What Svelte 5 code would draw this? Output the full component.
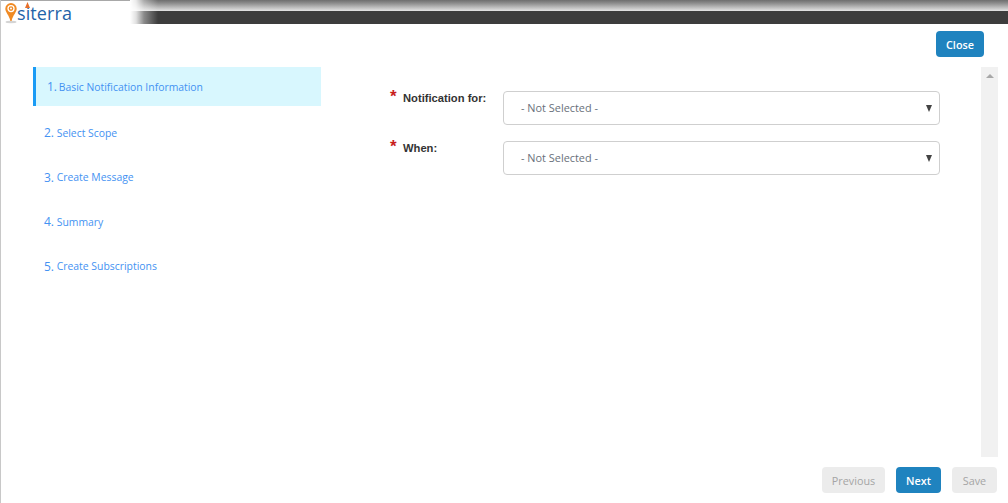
<script lang="ts">
	const steps = [
		'Basic Notification Information',
		'Select Scope',
		'Create Message',
		'Summary',
		'Create Subscriptions'
	];
	const fields = ['Notification for:', 'When:'];
	let active = $state(0);
</script>

<div class="page">
	<header class="topbar">
		<div class="logo">
			<svg class="pin" width="14" height="22" viewBox="0 0 14 22" aria-hidden="true">
				<ellipse cx="7" cy="20" rx="5.5" ry="1.2" fill="#d4d4d4" />
				<path d="M7 1a5.7 5.7 0 0 0-5.7 5.7C1.300 10.500 5 12.500 6.400 19h1.200C9 12.500 12.700 10.500 12.700 6.700A5.700 5.700 0 0 0 7 1z" fill="#f08a24" />
				<circle cx="7" cy="6.600" r="3" fill="none" stroke="#fff" stroke-width="1.300" />
				<circle cx="7" cy="6.600" r="1" fill="#fff" />
			</svg>
			<span class="wordmark">siterra</span>
			<svg class="flame" width="5" height="6" viewBox="0 0 5 6" aria-hidden="true">
				<path d="M2.500 0L5 6H0z" fill="#e8702a" />
			</svg>
		</div>
		<div class="band"></div>
	</header>

	<div class="close-row">
		<button class="btn primary close">Close</button>
	</div>

	<main class="body">
		<nav class="steps">
			{#each steps as step, i}
				<button class="step" class:active={i === active} onclick={() => (active = i)}>
					<span class="num">{i + 1}.</span> {step}
				</button>
			{/each}
		</nav>

		<form class="form">
			{#each fields as field}
				<div class="field">
					<span class="star">*</span>
					<label class="label" for={field}>{field}</label>
					<div class="select" id={field}>
						<span class="value">- Not Selected -</span>
						<span class="caret"></span>
					</div>
				</div>
			{/each}
		</form>

		<div class="scrollbar"><span class="up"></span></div>
	</main>

	<footer class="footer">
		<button class="btn disabled prev">Previous</button>
		<button class="btn primary next">Next</button>
		<button class="btn disabled save">Save</button>
	</footer>
</div>

<style>
	:global(body) {
		margin: 0;
		background: #fff;
	}

	.page {
		height: 503px;
		display: flex;
		flex-direction: column;
		border-left: 1px solid #c8c8c8;
		box-sizing: border-box;
		font-family: 'Open Sans', 'Noto Sans', sans-serif;
		overflow: hidden;
	}

	.topbar {
		height: 24px;
		flex: none;
		display: flex;
		box-sizing: border-box;
	}

	.logo {
		width: 129px;
		flex: none;
		display: flex;
		align-items: center;
		position: relative;
		padding-left: 3px;
		box-sizing: border-box;
		border-top: 1px solid #a8a8a8;
	}

	.pin {
		flex: none;
		margin-top: 1px;
	}

	.wordmark {
		font-size: 18px;
		line-height: 20px;
		color: #1f63a8;
		margin-left: -1px;
		letter-spacing: 0.1px;
	}

	.flame {
		position: absolute;
		left: 24px;
		top: 1px;
	}

	.band {
		flex: 1;
		background: linear-gradient(to bottom, #6e6e6e 0, #8a8a8a 3px, #e4e4e4 11px, #3d3d3d 11px, #3d3d3d 100%);
		position: relative;
	}

	.band::before {
		content: '';
		position: absolute;
		left: 0;
		top: 0;
		bottom: 0;
		width: 28px;
		background: linear-gradient(
			to right,
			#fff 0,
			rgba(255, 255, 255, 0.85) 6px,
			rgba(255, 255, 255, 0.4) 14px,
			rgba(255, 255, 255, 0) 100%
		);
	}

	.close-row {
		flex: none;
		height: 43px;
		display: flex;
		justify-content: flex-end;
		align-items: flex-end;
		padding-right: 24px;
		box-sizing: border-box;
		padding-bottom: 10px;
	}

	.btn {
		height: 26px;
		border: none;
		border-radius: 4px;
		font-family: inherit;
		font-size: 10.800px;
		font-weight: 400;
		padding: 0;
		cursor: pointer;
	}

	.primary {
		background: #1f83bf;
		color: #fff;
		font-weight: 600;
	}

	.disabled {
		background: #ececec;
		color: #a5a5a5;
		cursor: default;
	}

	.close {
		width: 48px;
	}

	.body {
		flex: 1;
		min-height: 0;
		display: flex;
		padding-left: 32px;
	}

	.steps {
		width: 288px;
		flex: none;
		display: flex;
		flex-direction: column;
	}

	.step {
		height: 44.400px;
		flex: none;
		display: flex;
		align-items: center;
		border: none;
		background: none;
		padding: 0 0 0 11px;
		font-family: inherit;
		font-size: 10.400px;
		color: #4492f2;
		text-align: left;
		cursor: pointer;
		white-space: pre;
	}

	.step.active {
		height: 39px;
		background: #d8f7fe;
		border-left: 3px solid #1a9bf5;
		padding-left: 11px;
		margin-bottom: 4.800px;
	}

	.num {
		font-size: 12px;
	}

	.step.active .num {
		margin-right: -1px;
	}

	.form {
		flex: 1;
		min-width: 0;
		padding: 24px 0 0 69px;
		display: flex;
		flex-direction: column;
		gap: 16px;
	}

	.field {
		display: flex;
		height: 34px;
		position: relative;
		padding-left: 13px;
	}

	.star {
		position: absolute;
		left: 0;
		top: -4px;
		color: #c8201c;
		font-family: 'Liberation Sans', sans-serif;
		font-size: 17px;
		font-weight: 700;
		line-height: 20px;
	}

	.label {
		width: 100px;
		flex: none;
		font-family: 'Liberation Sans', Arial, sans-serif;
		font-size: 11.200px;
		font-weight: 700;
		color: #333;
		line-height: 14px;
	}

	.select {
		width: 437px;
		flex: none;
		display: flex;
		align-items: center;
		justify-content: space-between;
		box-sizing: border-box;
		border: 1px solid #cfcfcf;
		border-radius: 4px;
		padding: 0 7px 0 17px;
		font-size: 10.900px;
		color: #68707a;
		background: #fff;
	}

	.value {
		margin-bottom: 2px;
	}

	.caret {
		width: 0;
		height: 0;
		border-left: 3.500px solid transparent;
		border-right: 3.500px solid transparent;
		border-top: 7px solid #444;
	}

	.scrollbar {
		width: 17px;
		flex: none;
		height: 390px;
		background: #f1f1f1;
		margin-right: 10px;
		display: flex;
		justify-content: center;
		padding-top: 7px;
		box-sizing: border-box;
	}

	.up {
		width: 0;
		height: 0;
		border-left: 4px solid transparent;
		border-right: 4px solid transparent;
		border-bottom: 4px solid #a8a8a8;
	}

	.footer {
		flex: none;
		height: 46px;
		display: flex;
		justify-content: flex-end;
		gap: 11px;
		padding: 0 11px 10px 0;
		box-sizing: border-box;
		align-items: flex-end;
	}

	.prev {
		width: 63px;
	}

	.next {
		width: 45px;
	}

	.save {
		width: 45px;
	}
</style>
